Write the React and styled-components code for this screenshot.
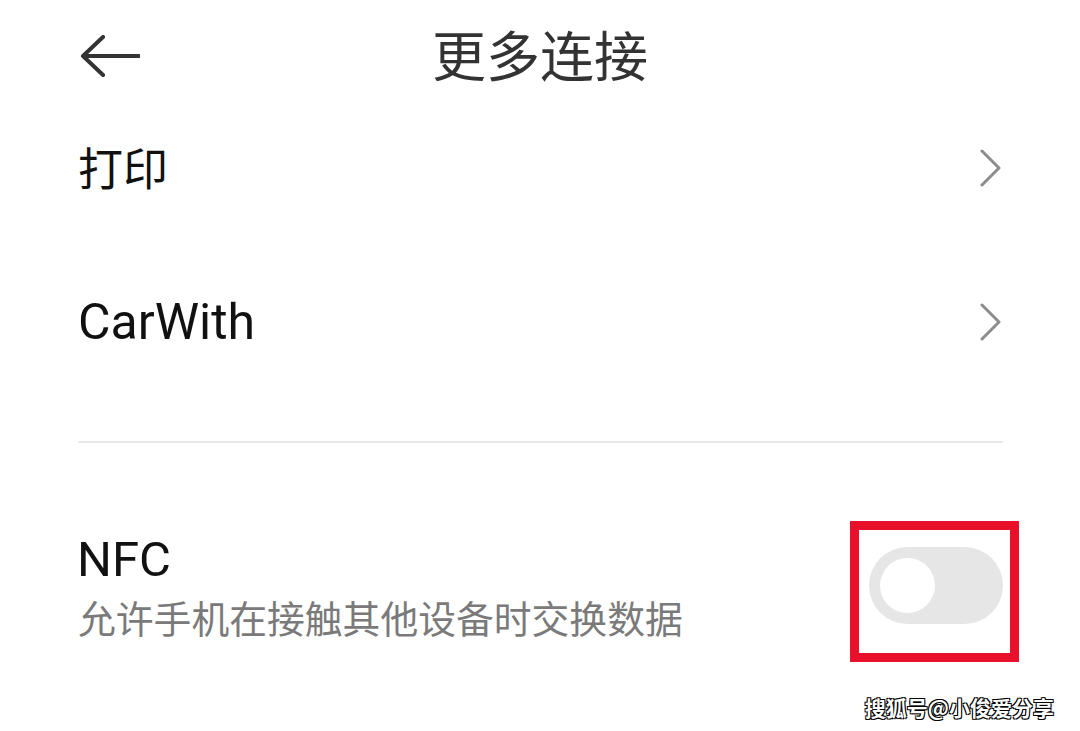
import React, { useState } from 'react';
import styled, { createGlobalStyle } from 'styled-components';

const GlobalStyle = createGlobalStyle`
  html, body {
    margin: 0;
    padding: 0;
    background: #fff;
  }

  body {
    font-family: Roboto, "Noto Sans", "Noto Sans CJK SC", sans-serif;
  }
`;

const Screen = styled.div`
  position: relative;
  width: 1080px;
  height: 731px;
  overflow: hidden;
  background: #fff;
`;

const Header = styled.header`
  display: grid;
  grid-template-columns: 1fr auto 1fr;
  align-items: center;
  height: 112px;
  padding: 0 80px;
`;

const BackButton = styled.button`
  justify-self: start;
  display: flex;
  padding: 0;
  border: 0;
  background: none;
  cursor: pointer;
`;

const Title = styled.h1`
  margin: 0 0 4px;
  font-family: "Noto Sans CJK SC", sans-serif;
  font-size: 54px;
  font-weight: 400;
  line-height: 1;
  color: #333;
`;

const List = styled.div`
  display: flex;
  flex-direction: column;
  padding: 0 77px 0 78px;
`;

const LinkRow = styled.div`
  display: flex;
  align-items: center;
  justify-content: space-between;
  height: 112px;
  margin-top: ${(p) => (p.$first ? '0' : '42px')};
`;

const RowLabel = styled.span`
  margin-bottom: ${(p) => (p.$latin ? '0' : '4px')};
  font-family: ${(p) =>
    p.$latin
      ? 'Roboto, "Noto Sans", sans-serif'
      : '"Noto Sans CJK SC", sans-serif'};
  font-size: ${(p) => (p.$latin ? '50px' : '45px')};
  color: #111;
  line-height: 1;
`;

const Divider = styled.hr`
  margin: 63px 0 0;
  border: 0;
  height: 2px;
  background: #e8e8e8;
`;

const SwitchRow = styled.div`
  display: flex;
  align-items: center;
  justify-content: space-between;
  padding-top: 89px;
`;

const TextBlock = styled.div`
  display: flex;
  flex-direction: column;
`;

const SwitchTitle = styled.div`
  margin-left: -1px;
  font-family: Roboto, "Noto Sans", sans-serif;
  font-size: 49px;
  line-height: 56px;
  color: #111;
`;

const SwitchDesc = styled.div`
  margin-top: 7px;
  font-family: "Noto Sans CJK SC", sans-serif;
  font-size: 37.8px;
  line-height: 44px;
  color: #7a7a7a;
`;

const SwitchWrap = styled.div`
  position: relative;
`;

const Track = styled.button`
  display: flex;
  align-items: center;
  width: 134px;
  height: 77px;
  padding: 0 11px;
  border: 0;
  border-radius: 39px;
  background: ${(p) => (p.$on ? '#0d84ff' : '#e6e6e6')};
  justify-content: ${(p) => (p.$on ? 'flex-end' : 'flex-start')};
  cursor: pointer;
`;

const Knob = styled.span`
  width: 55px;
  height: 55px;
  border-radius: 50%;
  background: #fff;
`;

const Highlight = styled.div`
  position: absolute;
  top: -26px;
  left: -19px;
  width: 169px;
  height: 141px;
  box-sizing: border-box;
  border: 9px solid #e8102a;
  pointer-events: none;
`;

const Watermark = styled.div`
  position: absolute;
  top: 694px;
  right: 26px;
  font-family: "Noto Sans CJK SC", sans-serif;
  font-size: 21px;
  font-weight: 700;
  line-height: 26px;
  color: #fff;
  text-shadow: 1px 1px 0 #000, -1px -1px 0 #000, 1px -1px 0 #000, -1px 1px 0 #000;
`;

const BackArrow = () => (
  <svg width="60" height="42" viewBox="0 0 60 42" fill="none">
    <path
      d="M3 21 H59 M23 2 L3 21 L23 40"
      stroke="#333"
      strokeWidth="4"
      strokeLinecap="round"
      strokeLinejoin="round"
    />
  </svg>
);

const Chevron = () => (
  <svg width="24" height="38" viewBox="0 0 24 38" fill="none">
    <path
      d="M3 2 L20 19 L3 36"
      stroke="#8c8c8c"
      strokeWidth="3"
      strokeLinecap="round"
      strokeLinejoin="round"
    />
  </svg>
);

const App = () => {
  const [nfc, setNfc] = useState(false);

  return (
    <>
      <GlobalStyle />
      <Screen>
        <Header>
          <BackButton aria-label="返回">
            <BackArrow />
          </BackButton>
          <Title>更多连接</Title>
          <span />
        </Header>

        <List>
          <LinkRow $first>
            <RowLabel>打印</RowLabel>
            <Chevron />
          </LinkRow>
          <LinkRow>
            <RowLabel $latin>CarWith</RowLabel>
            <Chevron />
          </LinkRow>

          <Divider />

          <SwitchRow>
            <TextBlock>
              <SwitchTitle>NFC</SwitchTitle>
              <SwitchDesc>允许手机在接触其他设备时交换数据</SwitchDesc>
            </TextBlock>
            <SwitchWrap>
              <Track $on={nfc} onClick={() => setNfc(!nfc)}>
                <Knob />
              </Track>
              <Highlight />
            </SwitchWrap>
          </SwitchRow>
        </List>

        <Watermark>搜狐号@小俊爱分享</Watermark>
      </Screen>
    </>
  );
};

export default App;
